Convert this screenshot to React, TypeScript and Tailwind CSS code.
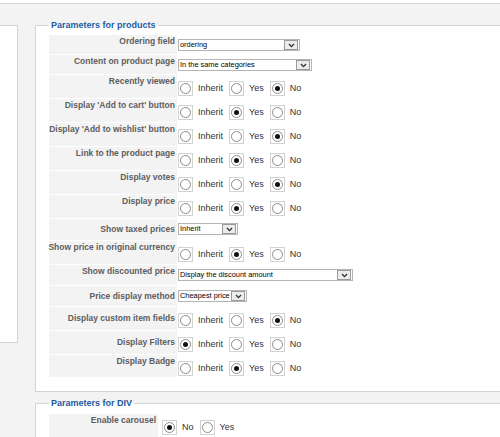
type Row = {
    label: string,
    h: string,
    center?: boolean,
    select?: { text: string, w: string },
    checked?: number,
}

const rows: Row[] = [
    { label: "Ordering field", h: "h-[19px]", select: { text: "ordering", w: "w-[122px]" } },
    { label: "Content on product page", h: "h-[19px]", select: { text: "In the same categories", w: "w-[134px]" } },
    { label: "Recently viewed", h: "h-[23px]", checked: 2 },
    { label: "Display 'Add to cart' button", h: "h-[23px]", checked: 1 },
    { label: "Display 'Add to wishlist' button", h: "h-[23px]", checked: 2 },
    { label: "Link to the product page", h: "h-[23px]", checked: 1 },
    { label: "Display votes", h: "h-[23px]", checked: 2 },
    { label: "Display price", h: "h-[23px]", checked: 1 },
    { label: "Show taxed prices", h: "h-[21px]", center: true, select: { text: "Inherit", w: "w-[60px]" } },
    { label: "Show price in original currency", h: "h-[23px]", checked: 1 },
    { label: "Show discounted price", h: "h-[20px]", select: { text: "Display the discount amount", w: "w-[175px]" } },
    { label: "Price display method", h: "h-[20px]", center: true, select: { text: "Cheapest price", w: "w-[69px]" } },
    { label: "Display custom item fields", h: "h-[23px]", center: true, checked: 2 },
    { label: "Display Filters", h: "h-[23px]", center: true, checked: 0 },
    { label: "Display Badge", h: "h-[22px]", checked: 1 },
]

const Radio = ({ on }: { on: boolean }) => (
    <span className="w-[15px] h-[15px] shrink-0 border border-[#d2d2d2] bg-white flex items-center justify-center">
        <span className="w-[11px] h-[11px] rounded-full border border-[#8c8c8c] bg-white flex items-center justify-center">
            {on && <span className="w-[5px] h-[5px] rounded-full bg-[#111]" />}
        </span>
    </span>
)

const RadioGroup = ({ options, checked }: { options: string[], checked: number }) => (
    <div className="flex items-center">
        {options.map((o, i) => (
            <div key={o} className="flex items-center">
                <Radio on={i === checked} />
                <span className="ml-[5px] mr-[6px] text-[9px] leading-[11px] text-[#333]">{o}</span>
            </div>
        ))}
    </div>
)

const Select = ({ text, w }: { text: string, w: string }) => (
    <div className={`${w} h-[12px] border border-[#b4b4b4] bg-white flex items-center`}>
        <span className="flex-1 pl-px text-[7.4px] leading-none text-black whitespace-nowrap overflow-hidden">{text}</span>
        <span className="w-[14px] h-[10px] mr-px shrink-0 border border-[#9a9a9a] bg-[#ececec] flex items-center justify-center">
            <svg width="7" height="5" viewBox="0 0 7 5">
                <path d="M1 1 L3.5 3.6 L6 1" fill="none" stroke="#2b2b3a" strokeWidth="1.3" />
            </svg>
        </span>
    </div>
)

export default function App() {
    return (
        <div className="w-[500px] h-[437px] overflow-hidden bg-[#f3f3f3] font-['Liberation_Sans',Arial,sans-serif]">
            <div className="h-[4px] bg-white border-b border-[#d9d9d9]" />
            <div className="flex pt-[16px]">
                <div className="w-[18px] h-[318px] mt-[5px] shrink-0 bg-white border-t border-r border-b border-[#d4d4d4]" />
                <div className="ml-[17px] w-[480px] shrink-0 flex flex-col gap-[6px]">
                    <fieldset className="bg-white border border-[#d4d4d4] pl-[13px] pt-[4px] pb-[14px]">
                        <legend className="px-[2px] text-[9px] leading-[11px] font-bold text-[#1c5ba2]">
                            Parameters for products
                        </legend>
                        <div className="flex flex-col gap-px">
                            {rows.map((r) => (
                                <div key={r.label} className={`flex gap-px ${r.h}`}>
                                    <div className={`w-[128px] shrink-0 bg-[#f3f3f3] flex justify-end pr-[2px] ${r.center ? "items-center" : "items-start pt-px"}`}>
                                        <span className="text-[8.5px] leading-[11px] font-bold text-[#5e5e5e] whitespace-nowrap">{r.label}</span>
                                    </div>
                                    <div className={`flex-1 flex items-start ${r.select ? "pt-[4px]" : "pt-[6px]"}`}>
                                        {r.select ? (
                                            <Select text={r.select.text} w={r.select.w} />
                                        ) : (
                                            <RadioGroup options={["Inherit", "Yes", "No"]} checked={r.checked ?? 0} />
                                        )}
                                    </div>
                                </div>
                            ))}
                        </div>
                    </fieldset>
                    <fieldset className="bg-white border border-[#d4d4d4] pl-[13px] pt-[5px] pb-[14px]">
                        <legend className="px-[2px] text-[9px] leading-[11px] font-bold text-[#1c5ba2]">
                            Parameters for DIV
                        </legend>
                        <div className="flex gap-px h-[24px]">
                            <div className="w-[109px] shrink-0 bg-[#f3f3f3] flex justify-end items-start pt-px pr-[2px]">
                                <span className="text-[8.5px] leading-[11px] font-bold text-[#5e5e5e] whitespace-nowrap">Enable carousel</span>
                            </div>
                            <div className="flex-1 flex items-start pt-[6px] pl-[3px]">
                                <RadioGroup options={["No", "Yes"]} checked={0} />
                            </div>
                        </div>
                    </fieldset>
                </div>
            </div>
        </div>
    )
}
